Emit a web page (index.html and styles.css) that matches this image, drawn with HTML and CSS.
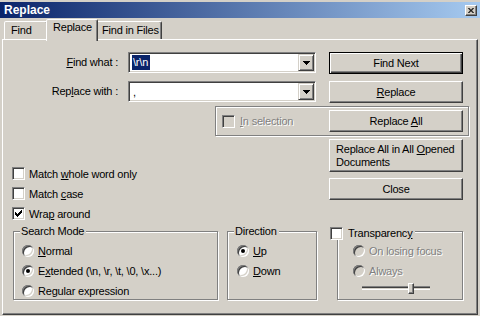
FILE: index.html
```html
<!DOCTYPE html>
<html lang="en">
<head>
    <meta charset="UTF-8">
    <title>Replace</title>

    <link rel="stylesheet" href="styles.css">
</head>

<body>
<div class="titlebar">
    <span class="title">Replace</span>
    <span class="close-btn">
        <svg width="8" height="7" viewBox="0 0 8 7"><path d="M0 0h2v1h1v1h2v-1h1v-1h2v1h-1v1h-1v1h-1v1h1v1h1v1h1v1h-2v-1h-1v-1h-2v1h-1v1h-2v-1h1v-1h1v-1h1v-1h-1v-1h-1v-1h-1z"/></svg>
    </span>
</div>

<div class="tabs">
    <div class="tab tab-find">Find</div>
    <div class="tab tab-active">Replace</div>
    <div class="tab tab-files">Find in Files</div>
</div>

<div class="panel">
    <div class="field-row">
        <label class="field-label"><u>F</u>ind what :</label>
        <div class="combo">
            <span class="combo-text"><span class="selected">\r\n</span></span>
            <span class="combo-btn"><svg width="7" height="4" viewBox="0 0 7 4"><path d="M0 0h7v1h-1v1h-1v1h-1v1h-1v-1h-1v-1h-1v-1h-1z"/></svg></span>
        </div>
        <button class="btn btn-default">Find Next</button>
    </div>

    <div class="field-row second">
        <label class="field-label">Rep<u>l</u>ace with :</label>
        <div class="combo">
            <span class="combo-text">,</span>
            <span class="combo-btn"><svg width="7" height="4" viewBox="0 0 7 4"><path d="M0 0h7v1h-1v1h-1v1h-1v1h-1v-1h-1v-1h-1v-1h-1z"/></svg></span>
        </div>
        <button class="btn"><u>R</u>eplace</button>
    </div>

    <div class="selection-box">
        <span class="check off"></span>
        <span class="disabled"><u>I</u>n selection</span>
        <button class="btn">Replace <u>A</u>ll</button>
    </div>

    <div class="middle">
        <div class="options">
            <div class="check-row"><span class="check"></span><span>Match <u>w</u>hole word only</span></div>
            <div class="check-row"><span class="check"></span><span>Match <u>c</u>ase</span></div>
            <div class="check-row">
                <span class="check"><svg width="11" height="11" viewBox="0 0 11 11"><path d="M8 2h1v1h-1zM7 3h2v1h-2zM2 4h1v1h-1zM6 4h3v1h-3zM2 5h2v1h-2zM5 5h3v1h-3zM2 6h5v1h-5zM3 7h3v1h-3zM4 8h1v1h-1z"/></svg></span>
                <span>Wra<u>p</u> around</span>
            </div>
        </div>
        <div class="side-buttons">
            <button class="btn btn-tall">Replace All in All <u>O</u>pened<br>Documents</button>
            <button class="btn">Close</button>
        </div>
    </div>

    <div class="groups">
        <div class="group group-mode">
            <div class="group-title">Search Mode</div>
            <div class="radio-row first"><span class="radio"></span><span><u>N</u>ormal</span></div>
            <div class="radio-row"><span class="radio on"></span><span>E<u>x</u>tended (\n, \r, \t, \0, \x...)</span></div>
            <div class="radio-row"><span class="radio"></span><span>Re<u>g</u>ular expression</span></div>
        </div>

        <div class="group group-dir">
            <div class="group-title">Direction</div>
            <div class="radio-row first"><span class="radio on"></span><span><u>U</u>p</span></div>
            <div class="radio-row"><span class="radio"></span><span><u>D</u>own</span></div>
        </div>

        <div class="group group-trans">
            <div class="group-title trans-title"><span class="check"></span><span>Transparenc<u>y</u></span></div>
            <div class="radio-row first"><span class="radio off"></span><span class="disabled">On losing focus</span></div>
            <div class="radio-row"><span class="radio off"></span><span class="disabled">Always</span></div>
            <div class="slider"><span class="thumb"></span></div>
        </div>
    </div>
</div>
</body>
</html>
```

FILE: styles.css
```css
body {
    margin: 0;
    padding-top: 2px;
    height: 316px;
    overflow: hidden;
    box-sizing: border-box;
    background-color: #D4D0C8;
    font-family: "Liberation Sans", Arial, sans-serif;
    font-size: 11px;
    letter-spacing: -0.2px;
    white-space: nowrap;
    color: #000;
}

u {
    text-underline-offset: 1px;
}

/* title bar */
.titlebar {
    height: 16px;
    display: flex;
    align-items: center;
    justify-content: space-between;
    padding: 0 3px 0 4px;
    background: linear-gradient(to right, #0A246A, #A6CAF0);
}

.title {
    color: #fff;
    font-weight: bold;
    font-size: 12px;
    letter-spacing: 0;
}

.close-btn {
    width: 12px;
    height: 11px;
    box-sizing: border-box;
    display: flex;
    align-items: center;
    justify-content: center;
    background: #D4D0C8;
    border: 1px solid;
    border-color: #fff #404040 #404040 #fff;
    box-shadow: inset -1px -1px 0 #808080;
}

.close-btn svg {
    width: 6px;
    height: 5px;
}

/* tabs */
.tabs {
    display: flex;
    align-items: flex-end;
    height: 21px;
    padding-left: 4px;
}

.tab {
    box-sizing: border-box;
    height: 18px;
    padding-left: 6px;
    line-height: 16px;
    background: #D4D0C8;
    border: 1px solid;
    border-bottom: 0;
    border-color: #fff #404040 transparent #fff;
    box-shadow: inset -1px 0 0 #808080;
    border-radius: 2px 2px 0 0;
}

.tab-find {
    width: 44px;
}

.tab-active {
    width: 52px;
    height: 22px;
    line-height: 14px;
    margin: 0 -2px -2px;
    position: relative;
    z-index: 1;
}

.tab-files {
    width: 66px;
    padding-left: 5px;
}

/* main panel */
.panel {
    box-sizing: border-box;
    height: 276px;
    margin: 0 2px;
    padding-top: 12px;
    border: 1px solid;
    border-color: #fff #404040 #404040 #fff;
    box-shadow: inset -1px -1px 0 #808080;
}

.field-row {
    display: flex;
    align-items: flex-start;
}

.field-row.second {
    margin-top: 7px;
}

.field-label {
    width: 115px;
    margin-right: 10px;
    text-align: right;
    line-height: 21px;
}

.combo {
    box-sizing: border-box;
    width: 188px;
    height: 21px;
    margin-right: 13px;
    padding: 1px 1px 1px 4px;
    display: flex;
    align-items: center;
    justify-content: space-between;
    background: #fff;
    border: 1px solid;
    border-color: #808080 #fff #fff #808080;
    box-shadow: inset 1px 1px 0 #404040, inset -1px -1px 0 #D4D0C8;
}

.selected {
    display: inline-block;
    padding: 0 2px 0 1px;
    margin-left: -1px;
    line-height: 15px;
    background: #0A246A;
    color: #fff;
}

.combo-btn {
    box-sizing: border-box;
    width: 16px;
    height: 17px;
    display: flex;
    align-items: center;
    justify-content: center;
    background: #D4D0C8;
    border: 1px solid;
    border-color: #D4D0C8 #404040 #404040 #D4D0C8;
    box-shadow: inset 1px 1px 0 #fff, inset -1px -1px 0 #808080;
}

.btn {
    box-sizing: border-box;
    width: 134px;
    height: 22px;
    padding: 0;
    font: inherit;
    letter-spacing: inherit;
    color: #000;
    background: #D4D0C8;
    border: 1px solid;
    border-color: #fff #404040 #404040 #fff;
    box-shadow: inset -1px -1px 0 #808080;
}

.btn-default {
    border-color: #000;
    box-shadow: inset 1px 1px 0 #fff, inset -1px -1px 0 #404040, inset -2px -2px 0 #808080;
}

.btn-tall {
    height: 33px;
    padding-left: 6px;
    text-align: left;
    line-height: 13px;
}

/* in selection */
.selection-box {
    box-sizing: border-box;
    width: 254px;
    height: 30px;
    margin: 3px 0 0 212px;
    padding: 0 5px 0 6px;
    display: flex;
    align-items: center;
    gap: 5px;
    border: 1px solid #808080;
    box-shadow: inset 1px 1px 0 #fff, 1px 1px 0 #fff;
}

.selection-box .btn {
    margin-left: auto;
}

.check {
    box-sizing: border-box;
    width: 13px;
    height: 13px;
    flex: none;
    background: #fff;
    border: 1px solid;
    border-color: #808080 #fff #fff #808080;
    box-shadow: inset 1px 1px 0 #404040, inset -1px -1px 0 #D4D0C8;
}

.check svg {
    display: block;
    shape-rendering: crispEdges;
}

.check.off {
    background: #D4D0C8;
}

.disabled {
    color: #808080;
    text-shadow: 1px 1px 0 #fff;
}

/* middle */
.middle {
    display: flex;
    margin-top: 3px;
}

.options {
    box-sizing: border-box;
    width: 326px;
    padding: 28px 0 0 9px;
}

.check-row {
    display: flex;
    align-items: center;
    gap: 4px;
    height: 13px;
    margin-bottom: 7px;
}

.check-row:last-child {
    margin-bottom: 0;
}

.side-buttons {
    display: flex;
    flex-direction: column;
    gap: 6px;
}

/* group boxes */
.groups {
    display: flex;
    margin-top: 11px;
    padding-left: 10px;
}

.group {
    box-sizing: border-box;
    height: 69px;
    border: 1px solid #808080;
    box-shadow: inset 1px 1px 0 #fff, 1px 1px 0 #fff;
}

.group-title {
    width: fit-content;
    margin: -7px 0 0 6px;
    padding: 0 2px 0 1px;
    line-height: 13px;
    background: #D4D0C8;
}

.group-mode {
    width: 205px;
    padding-left: 8px;
}

.group-mode .group-title {
    margin-left: -2px;
}

.group-dir {
    width: 90px;
    margin-left: 9px;
    padding-left: 9px;
}

.group-dir .group-title {
    margin-left: -3px;
}

.group-trans {
    width: 126px;
    margin-left: 20px;
    padding-left: 15px;
}

.trans-title {
    display: flex;
    align-items: center;
    gap: 5px;
    height: 13px;
    margin: -5px 0 0 -23px;
    padding: 0 3px 0 0;
}

.radio-row {
    display: flex;
    align-items: center;
    gap: 4px;
    height: 13px;
    margin-top: 7px;
}

.radio-row.first {
    margin-top: 6px;
}

.group-trans .radio-row.first {
    margin-top: 4px;
}

.radio {
    width: 12px;
    height: 12px;
    flex: none;
    border-radius: 50%;
    display: flex;
    align-items: center;
    justify-content: center;
    background: #fff;
    box-shadow: inset 1px 1px 0 #808080, inset -1px -1px 0 #fff, inset 2px 2px 0 #404040, inset -2px -2px 0 #D4D0C8;
}

.radio.off {
    background: #D4D0C8;
}

.radio.on::after {
    content: "";
    width: 4px;
    height: 4px;
    border-radius: 50%;
    background: #000;
}

.slider {
    width: 68px;
    height: 11px;
    margin: 6px 0 0 9px;
    background: linear-gradient(to bottom, transparent 3px, #808080 3px, #808080 4px, #404040 4px, #404040 5px, #D4D0C8 5px, #D4D0C8 6px, #fff 6px, #fff 7px, transparent 7px);
}

.thumb {
    display: block;
    box-sizing: border-box;
    width: 6px;
    height: 11px;
    margin-left: 46px;
    background: #D4D0C8;
    border: 1px solid;
    border-color: #fff #404040 #404040 #fff;
    box-shadow: inset -1px -1px 0 #808080;
}
```
